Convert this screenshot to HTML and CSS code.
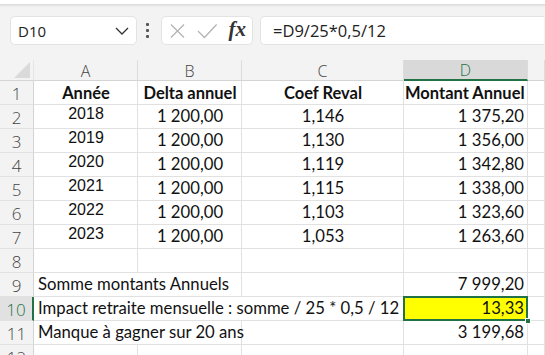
FILE: index.html
```
<!DOCTYPE html>
<html lang="fr">
<head>
    <meta charset="UTF-8">
    <title>Classeur - Impact retraite</title>
    <link rel="stylesheet" href="styles.css">
</head>
<body>
    <div class="top-edge"></div>

    <div class="formula-bar">
        <div class="name-box">
            <span>D10</span>
            <svg class="chevron" width="14" height="8" viewBox="0 0 14 8"><path d="M1 1 L7 7 L13 1" fill="none" stroke="#333" stroke-width="1.3"/></svg>
        </div>
        <div class="grip"><i></i><i></i><i></i></div>
        <div class="fx-box">
            <svg width="16" height="16" viewBox="0 0 16 16"><path d="M1 1 L15 15 M15 1 L1 15" stroke="#b3b3b3" stroke-width="1.3" fill="none"/></svg>
            <svg width="22" height="16" viewBox="0 0 22 16"><path d="M1 8 L8 15 L21 1" stroke="#b3b3b3" stroke-width="1.3" fill="none"/></svg>
            <span class="fx">fx</span>
        </div>
        <div class="formula">=D9/25*0,5/12</div>
    </div>

    <div class="sheet">
        <!-- column headers -->
        <div class="corner"><span class="tri"></span></div>
        <div class="col-head">A</div>
        <div class="col-head">B</div>
        <div class="col-head">C</div>
        <div class="col-head active">D</div>
        <div class="col-head"></div>

        <div class="row-head">1</div>
        <div class="cell center bold">Année</div>
        <div class="cell center bold">Delta annuel</div>
        <div class="cell center bold">Coef Reval</div>
        <div class="cell bold tight">Montant Annuel</div>
        <div class="cell"></div>

        <div class="row-head">2</div>
        <div class="cell center year">2018</div>
        <div class="cell center">1 200,00</div>
        <div class="cell center">1,146</div>
        <div class="cell right">1 375,20</div>
        <div class="cell"></div>

        <div class="row-head">3</div>
        <div class="cell center year">2019</div>
        <div class="cell center">1 200,00</div>
        <div class="cell center">1,130</div>
        <div class="cell right">1 356,00</div>
        <div class="cell"></div>

        <div class="row-head">4</div>
        <div class="cell center year">2020</div>
        <div class="cell center">1 200,00</div>
        <div class="cell center">1,119</div>
        <div class="cell right">1 342,80</div>
        <div class="cell"></div>

        <div class="row-head">5</div>
        <div class="cell center year">2021</div>
        <div class="cell center">1 200,00</div>
        <div class="cell center">1,115</div>
        <div class="cell right">1 338,00</div>
        <div class="cell"></div>

        <div class="row-head">6</div>
        <div class="cell center year">2022</div>
        <div class="cell center">1 200,00</div>
        <div class="cell center">1,103</div>
        <div class="cell right">1 323,60</div>
        <div class="cell"></div>

        <div class="row-head">7</div>
        <div class="cell center year">2023</div>
        <div class="cell center">1 200,00</div>
        <div class="cell center">1,053</div>
        <div class="cell right">1 263,60</div>
        <div class="cell"></div>

        <div class="row-head">8</div>
        <div class="cell"></div>
        <div class="cell"></div>
        <div class="cell"></div>
        <div class="cell"></div>
        <div class="cell"></div>

        <div class="row-head">9</div>
        <div class="cell span-2">Somme montants Annuels</div>
        <div class="cell"></div>
        <div class="cell right">7 999,20</div>
        <div class="cell"></div>

        <div class="row-head active">10</div>
        <div class="cell span-3">Impact retraite mensuelle : somme / 25 * 0,5 / 12</div>
        <div class="cell right highlight selected">13,33<span class="handle"></span></div>
        <div class="cell"></div>

        <div class="row-head">11</div>
        <div class="cell span-2">Manque à gagner sur 20 ans</div>
        <div class="cell"></div>
        <div class="cell right">3 199,68</div>
        <div class="cell"></div>

        <div class="row-head">12</div>
        <div class="cell"></div>
        <div class="cell"></div>
        <div class="cell"></div>
        <div class="cell"></div>
        <div class="cell"></div>
    </div>
</body>
</html>
```

FILE: styles.css
```
* {
    box-sizing: border-box;
}
body {
    margin: 0;
    background-color: #f3f3f3;
    font-family: "Lato", "Liberation Sans", sans-serif;
    color: #111;
    overflow: hidden;
}
.top-edge {
    height: 5px;
    background-color: #fff;
    border-bottom: 1px solid #dcdcdc;
    box-shadow: 0 1px 2px rgba(0, 0, 0, 0.08);
}
.formula-bar {
    display: flex;
    align-items: center;
    gap: 7px;
    padding: 8px 1px 0 10px;
    height: 43px;
}
.name-box,
.fx-box,
.formula {
    height: 29px;
    background-color: #fff;
    border: 1px solid #e3e3e3;
    border-radius: 5px;
    display: flex;
    align-items: center;
}
.name-box {
    width: 127px;
    padding: 0 7px 0 7px;
    justify-content: space-between;
    font-family: "Open Sans", "Liberation Sans", sans-serif;
    font-size: 15px;
    color: #222;
}
.chevron {
    margin-top: 1px;
}
.grip {
    display: flex;
    flex-direction: column;
    gap: 3px;
    width: 6px;
    align-items: center;
}
.grip i {
    width: 3px;
    height: 3px;
    background-color: #555;
    border-radius: 1px;
}
.fx-box {
    width: 92px;
    margin-left: 4px;
    padding: 0 6px 0 8px;
    gap: 12px;
}
.fx {
    font-family: "Liberation Serif", serif;
    font-style: italic;
    font-weight: 700;
    font-size: 21px;
    color: #333;
    margin-top: -3px;
    margin-left: -1px;
}
.formula {
    flex: 1;
    padding-left: 12px;
    border-right: none;
    border-radius: 5px 0 0 5px;
    font-family: "Open Sans", "Liberation Sans", sans-serif;
    font-size: 16.5px;
    color: #222;
}

/* worksheet */
.sheet {
    margin-top: 12px;
    display: grid;
    grid-template-columns: 34px 104px 104px 162px 124px 1fr;
    grid-template-rows: 21px repeat(12, 24px);
    background-color: #fff;
}
.corner,
.col-head,
.row-head {
    background-color: #f3f3f3;
    font-family: "Open Sans", "Liberation Sans", sans-serif;
    font-size: 16px;
    font-weight: 300;
    color: #444;
    display: flex;
    align-items: center;
    justify-content: center;
}
.corner {
    border-right: 1px solid #e6e6e6;
    border-bottom: 1px solid #d4d4d4;
    justify-content: flex-end;
    align-items: flex-end;
    padding: 0 3px 2px 0;
}
.tri {
    width: 0;
    height: 0;
    border-left: 16px solid transparent;
    border-bottom: 16px solid #dadada;
}
.col-head {
    border-right: 1px solid #dcdcdc;
    border-bottom: 1px solid #d4d4d4;
    padding-top: 1px;
}
.col-head.active {
    background-color: #d9d9d9;
    color: #217346;
    border-bottom: 2px solid #217346;
}
.row-head {
    border-right: 1px solid #d4d4d4;
    border-bottom: 1px solid #e1e1e1;
    padding-top: 2px;
    font-size: 17px;
}
.row-head.active {
    background-color: #e1e1e1;
    color: #217346;
    border-right: 2px solid #217346;
}
.cell {
    position: relative;
    border-right: 1px solid #e1e1e1;
    border-bottom: 1px solid #e1e1e1;
    display: flex;
    align-items: flex-end;
    padding: 0 3px 3px 4px;
    font-size: 16.7px;
    white-space: nowrap;
    line-height: 1;
}
.cell.center {
    justify-content: center;
}
.cell.right {
    justify-content: flex-end;
}
.cell.bold {
    font-weight: 700;
    font-size: 16.5px;
}
.cell.tight {
    padding-left: 1px;
}
.cell.year {
    font-family: "Liberation Sans", sans-serif;
    font-size: 16px;
    padding-bottom: 6px;
}
.span-2 {
    grid-column: span 2;
}
.span-3 {
    grid-column: span 3;
}
.highlight {
    background-color: #ffff00;
}
.selected::after {
    content: "";
    position: absolute;
    top: -1px;
    left: -1px;
    right: -1px;
    bottom: -1px;
    border: 2px solid #217346;
}
.handle {
    position: absolute;
    right: -4px;
    bottom: -4px;
    width: 6px;
    height: 6px;
    background-color: #217346;
    border: 1px solid #fff;
    z-index: 2;
}
```
